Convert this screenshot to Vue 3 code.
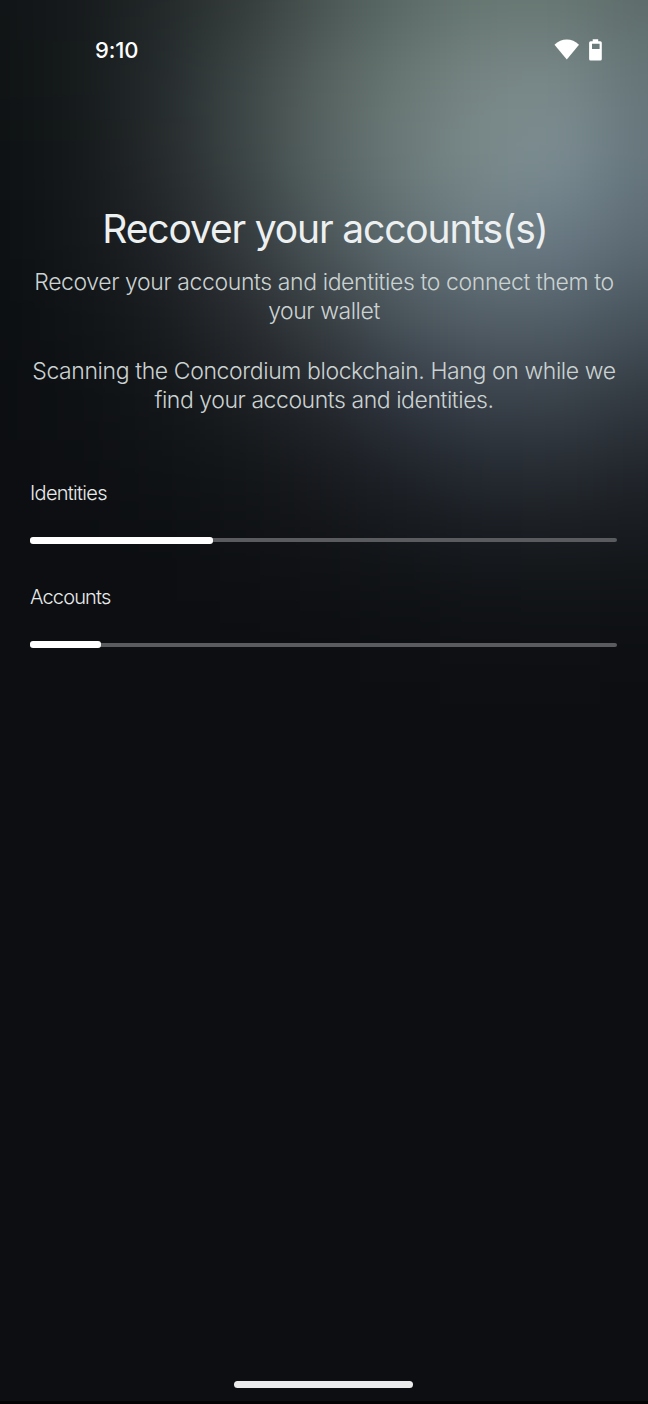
<script setup>
const mesh = [
  '101416 161a1c 222828 333a39 485451 5a6966 667671 667671 5d6c6a',
  '0f1314 161b1c 252b2d 3c4545 56625f 697874 788785 7a898a 667578',
  '0d1113 15191b 262a2c 3c4545 566362 6c7a7a 7a8a8b 7c8d93 66767d',
  '0d1012 14181a 202428 33393c 4b5659 5f6d71 6c7c82 697984 5c6a73',
  '0c0f11 111417 191c1f 272a2e 373e42 49545b 545f67 525f68 47535b',
  '0c0e11 0e1114 131619 1b1e21 24282d 303640 39414a 3a424a 31383f',
  '0c0e11 0d0f12 0f1215 121518 17191d 1d2127 23282f 24292f 1f2329',
  '0c0e11 0c0e11 0c0e11 0e1013 101215 121518 14171b 15181b 14171a',
  '0c0e11 0c0e11 0c0e11 0c0e11 0c0e11 0d0f12 0e1013 0e1013 0d0f12'
].map((row) => row.split(' '))

// Cells are centred on multiples of 80px; outer cells extend past the edges so the blur stays opaque.
const cells = mesh.flatMap((row, r) =>
  row.map((color, c) => {
    const left = c === 0 ? -200 : c * 80 - 40
    const right = c === 8 ? 900 : c * 80 + 41
    const top = r === 0 ? -200 : r * 80 - 40
    const bottom = r * 80 + 41
    return { x: left, y: top, w: right - left, h: bottom - top, fill: '#' + color }
  })
)

const scans = [
  { name: 'Identities', cls: 'identities', percent: 31.1 },
  { name: 'Accounts', cls: 'accounts', percent: 12.1 }
]
</script>

<template>
  <main class="screen">
    <svg class="backdrop" width="648" height="760" viewBox="0 0 648 760" aria-hidden="true">
      <defs>
        <filter id="soften" filterUnits="userSpaceOnUse" x="-200" y="-200" width="1100" height="1160" color-interpolation-filters="sRGB">
          <feGaussianBlur stdDeviation="34" />
        </filter>
      </defs>
      <g filter="url(#soften)">
        <rect x="-200" y="670" width="1100" height="290" fill="#0c0e11" />
        <rect v-for="(cell, i) in cells" :key="i" :x="cell.x" :y="cell.y" :width="cell.w" :height="cell.h" :fill="cell.fill" />
      </g>
    </svg>

    <header class="status">
      <span class="time">9:10</span>
      <svg class="status-icons" width="50" height="26" viewBox="0 0 50 26" fill="#fff">
        <path d="M.5 6.8C7.3-.3 18.2-.3 25 6.8L12.8 21.5Z" />
        <path fill-rule="evenodd" d="M38.7 1.2h5.5v2h2.1q1.5 0 1.5 1.5v16.3q0 1.5-1.5 1.5h-9.7q-1.5 0-1.5-1.5V4.7q0-1.5 1.5-1.5h2.1ZM38 5.7v5.3h7.6V5.7Z" />
      </svg>
    </header>

    <section class="intro">
      <h1>Recover your accounts(s)</h1>
      <p><span class="l1">Recover your accounts and identities to connect them to</span><span class="l2">your wallet</span></p>
      <p><span class="l3">Scanning the Concordium blockchain. Hang on while we</span><span class="l4">find your accounts and identities.</span></p>
    </section>

    <section class="scans">
      <div v-for="scan in scans" :key="scan.name" class="scan">
        <span class="label" :class="scan.cls">{{ scan.name }}</span>
        <div class="track"><div class="fill" :style="{ width: scan.percent + '%' }"></div></div>
      </div>
    </section>

    <footer class="gesture"><div class="handle"></div></footer>
  </main>
</template>

<style>
body { background: #0c0e11; }
</style>

<style scoped>
.screen {
  position: relative;
  display: flex;
  flex-direction: column;
  box-sizing: border-box;
  width: 648px;
  height: 1404px;
  overflow: hidden;
  background: #0c0e11;
  border-bottom: 3px solid #050204;
  font-family: Inter, "Liberation Sans", sans-serif;
}
.backdrop { position: absolute; left: 0; top: 0; }
.status, .intro, .scans, .gesture { position: relative; }
.status {
  display: flex;
  justify-content: space-between;
  height: 204px;
  padding: 38px 44px 0 95px;
  box-sizing: border-box;
}
.time { font-size: 22px; line-height: 24px; font-weight: 500; color: #fff; letter-spacing: -0.1px; }
.intro { text-align: center; white-space: nowrap; }
h1 {
  margin: 0 0 14px;
  padding-left: 2px;
  font-size: 39px;
  line-height: 50px;
  font-weight: 400;
  letter-spacing: -1.15px;
  color: #edf0f1;
}
p { margin: 0 0 30px; font-size: 23px; line-height: 29.4px; font-weight: 300; color: #cbd2d2; }
p span { display: block; }
.l1 { letter-spacing: -0.4px; }
.l2 { letter-spacing: -0.45px; }
.l3 { letter-spacing: -0.4px; }
.l4 { letter-spacing: -0.44px; }
.scans { padding: 35px 31px 0 30px; }
.scan { height: 104.5px; }
.label { display: block; height: 57.5px; font-size: 20px; line-height: 24px; font-weight: 300; color: #e8eaea; }
.identities { letter-spacing: -0.7px; }
.accounts { letter-spacing: -0.85px; }
.track { display: flex; align-items: center; height: 4px; border-radius: 2px; background: #595b5e; }
.fill { flex: none; height: 7px; border-radius: 3px; background: #fff; }
.gesture { display: flex; justify-content: center; margin-top: auto; padding: 0 2px 13px 0; }
.handle { width: 179px; height: 7px; border-radius: 4px; background: #ebebeb; }
</style>
